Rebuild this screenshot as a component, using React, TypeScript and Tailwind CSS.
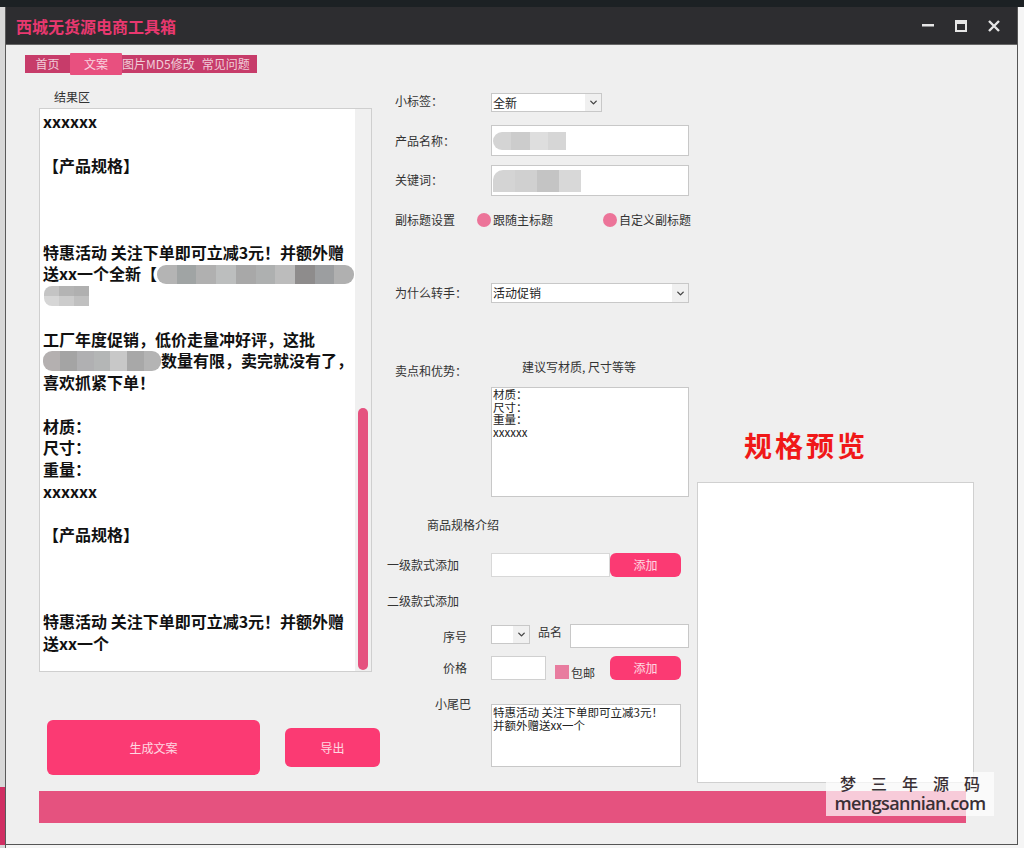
import { ChevronDown } from 'lucide-react'

const font = "font-['Noto_Sans_CJK_SC','Noto_Sans',sans-serif]"

// 结果区 lines, '' is an empty line
const resultLines: string[] = [
  'xxxxxx',
  '',
  '【产品规格】',
  '',
  '',
  '',
  '特惠活动 关注下单即可立减3元！并额外赠',
  'blur1',
  'blur2',
  '',
  '工厂年度促销，低价走量冲好评，这批',
  'blur3',
  '喜欢抓紧下单！',
  '',
  '材质：',
  '尺寸：',
  '重量：',
  'xxxxxx',
  '',
  '【产品规格】',
  '',
  '',
  '',
  '特惠活动 关注下单即可立减3元！并额外赠',
  '送xx一个',
]

// mosaic left over from the blurred product names
function Mosaic({ tones, className }: { tones: string[]; className: string }) {
  return (
    <span className={`flex shrink-0 overflow-hidden ${className}`}>
      {tones.map((tone, i) => (
        <span key={i} className={`flex-1 ${tone}`} />
      ))}
    </span>
  )
}

function ResultLine({ line }: { line: string }) {
  if (line === 'blur1') {
    return (
      <div className="flex items-center whitespace-pre">
        送xx一个全新【
        <Mosaic
          className="w-[197px] h-[19px] rounded-[9px] blur-[0.5px]"
          tones={['bg-[#b4b4b4]', 'bg-[#a0a4a4]', 'bg-[#b0b0b0]', 'bg-[#bcbebe]', 'bg-[#a8a8a8]', 'bg-[#aeb0b0]', 'bg-[#bcbcbc]', 'bg-[#8e8c8c]', 'bg-[#9c9ea0]', 'bg-[#b0b0b0]']}
        />
      </div>
    )
  }
  if (line === 'blur2') {
    return (
      <div className="flex flex-col h-[21.75px] justify-center pl-[1px]">
        <Mosaic className="w-[45px] h-[10px] rounded-tl-[8px] blur-[0.5px]" tones={['bg-[#c4c4c4]', 'bg-[#b4b4b4]', 'bg-[#b0b0b0]']} />
        <Mosaic className="w-[45px] h-[10px] rounded-bl-[8px] blur-[0.5px]" tones={['bg-[#d6d6d6]', 'bg-[#cccccc]', 'bg-[#c0c0c0]']} />
      </div>
    )
  }
  if (line === 'blur3') {
    return (
      <div className="flex items-center whitespace-pre">
        <Mosaic
          className="w-[118px] h-[20px] rounded-[9px] blur-[0.5px]"
          tones={['bg-[#b4b0b0]', 'bg-[#a4a4a4]', 'bg-[#b0b0b2]', 'bg-[#b4b6b6]', 'bg-[#c8c8c8]', 'bg-[#a8a8a8]', 'bg-[#b4b4b4]']}
        />
        数量有限，卖完就没有了，
      </div>
    )
  }
  return <div className="whitespace-pre min-h-[21.75px]">{line}</div>
}

function Select({ text, className }: { text: string; className: string }) {
  return (
    <div className={`flex items-center bg-white border border-[#c8c8c8] text-[12px] text-[#222] ${className}`}>
      <span className="flex-1 pl-[1px]">{text}</span>
      <span className="w-[16px] h-full flex items-center justify-center bg-[#f0f0f0]">
        <ChevronDown size={11} strokeWidth={3} className="text-[#444]" />
      </span>
    </div>
  )
}

function Radio({ text, className }: { text: string; className: string }) {
  return (
    <div className={`flex items-center gap-[2px] text-[12px] text-[#333] ${className}`}>
      <span className="w-[14px] h-[14px] rounded-full bg-[#ec7499]" />
      {text}
    </div>
  )
}

function AddButton() {
  return (
    <button className="w-[71px] h-[24px] rounded-[6px] bg-[#fb3a73] text-white/80 text-[12px]">添加</button>
  )
}

export default function App() {
  return (
    <div className={`relative w-[1024px] h-[848px] overflow-hidden flex flex-col bg-[#f5f5f5] ${font}`}>
      <div className="h-[7px] bg-[#1c2124]" />
      <div className="flex flex-1">
        <div className="w-[6px] flex flex-col justify-end bg-[#d8d8d8] border-r border-[#5a5a5a]">
          <div className="h-[58px] mb-[3px] bg-[#d02f63]" />
        </div>
        <div className="w-[1012px] h-[838px] flex flex-col bg-[#efefef] border-r border-b border-[#555]">
          {/* title bar */}
          <div className="h-[38px] flex items-center bg-[#2d2d30] border-b border-[#666]">
            <span className="ml-[10px] text-[16px] font-bold text-[#e8386f]">西城无货源电商工具箱</span>
            <div className="ml-auto mr-[17px] flex items-center gap-[21px]">
              <svg width="12" height="12" viewBox="0 0 12 12"><rect x="0" y="4" width="12" height="2.5" fill="#e6e6e6" /></svg>
              <svg width="12" height="12" viewBox="0 0 12 12"><rect x="1" y="1" width="10" height="10" fill="none" stroke="#e6e6e6" strokeWidth="2" /><rect x="1" y="1" width="10" height="3" fill="#e6e6e6" /></svg>
              <svg width="12" height="12" viewBox="0 0 12 12"><path d="M1 1l10 10M11 1L1 11" stroke="#e6e6e6" strokeWidth="2.4" fill="none" /></svg>
            </div>
          </div>

          {/* tabs */}
          <div className="mt-[8px] ml-[19px] h-[22px] flex items-center text-[12px] text-white/75">
            <div className="w-[232px] h-[18px] flex items-center bg-[#c73c6a]">
              <span className="w-[45px] text-center">首页</span>
              <span className="w-[52px] h-[22px] flex items-center justify-center rounded-[1px] bg-[#e8507f]">文案</span>
              <span className="whitespace-nowrap">图片MD5修改</span>
              <span className="ml-[7px]">常见问题</span>
            </div>
          </div>

          <div className="flex h-[708px]">
            {/* left column */}
            <div className="ml-[33px] w-[333px]">
              <div className="mt-[14px] h-[16px] pl-[15px] text-[12px] leading-[16px] text-[#333]">结果区</div>
              <div className="mt-[3px] h-[564px] flex bg-white border border-[#cfcfcf] overflow-hidden">
                <div className="flex-1 pl-[3px] pt-[2px] text-[16px] leading-[21.75px] font-bold text-[#111] overflow-hidden">
                  {resultLines.map((line, i) => (
                    <ResultLine key={i} line={line} />
                  ))}
                </div>
                <div className="w-[16px] flex flex-col justify-end items-center bg-[#f0f0f0]">
                  <div className="w-[10px] h-[262px] mb-[1px] rounded-full bg-[#e5527f]" />
                </div>
              </div>
              <div className="mt-[48px] ml-[8px] flex text-[12px] text-white/80">
                <button className="shrink-0 w-[213px] h-[55px] rounded-[6px] bg-[#fb3a73]">生成文案</button>
                <button className="shrink-0 ml-[25px] mt-[8px] w-[95px] h-[39px] rounded-[6px] bg-[#fb3a73]">导出</button>
              </div>
            </div>

            {/* middle column */}
            <div className="ml-[15px] w-[310px] text-[12px] text-[#333]">
              <div className="mt-[18px] h-[19px] flex items-center">
                <span className="w-[104px] pl-[8px] mb-[3px]">小标签：</span>
                <Select text="全新" className="w-[111px] h-full" />
              </div>
              <div className="mt-[13px] h-[31px] flex items-center">
                <span className="w-[104px] pl-[8px]">产品名称：</span>
                <div className="w-[198px] h-full flex items-center bg-white border border-[#c8c8c8] pl-[1px]">
                  <Mosaic className="w-[73px] h-[18px] rounded-l-[9px] blur-[0.5px]" tones={['bg-[#d4d4d4]', 'bg-[#cccccc]', 'bg-[#dedede]', 'bg-[#d6d6d6]']} />
                </div>
              </div>
              <div className="mt-[9px] h-[31px] flex items-center">
                <span className="w-[104px] pl-[8px] mb-[1px]">关键词：</span>
                <div className="w-[198px] h-full flex items-center bg-white border border-[#c8c8c8] pl-[1px]">
                  <Mosaic className="w-[88px] h-[22px] rounded-tl-[10px] blur-[0.5px]" tones={['bg-[#d4d4d4]', 'bg-[#d0d0d0]', 'bg-[#c4c4c4]', 'bg-[#d8d8d8]']} />
                </div>
              </div>
              <div className="mt-[16px] h-[16px] flex items-center whitespace-nowrap">
                <span className="w-[90px] pl-[8px]">副标题设置</span>
                <Radio text="跟随主标题" className="w-[126px]" />
                <Radio text="自定义副标题" className="" />
              </div>
              <div className="mt-[55px] h-[20px] flex items-center">
                <span className="w-[104px] pl-[8px]">为什么转手：</span>
                <Select text="活动促销" className="w-[198px] h-full" />
              </div>
              <div className="mt-[55px] h-[20px] flex">
                <span className="w-[135px] pl-[8px] pt-[4px]">卖点和优势：</span>
                <span>建议写材质, 尺寸等等</span>
              </div>
              <div className="mt-[9px] ml-[104px] w-[198px] h-[110px] bg-white border border-[#c8c8c8] pl-[1px] text-[11.5px] leading-[12.5px] text-[#222]">
                <div>材质：</div>
                <div>尺寸：</div>
                <div>重量：</div>
                <div>xxxxxx</div>
              </div>
              <div className="mt-[20px] h-[16px] pl-[40px] leading-[16px]">商品规格介绍</div>
              <div className="mt-[20px] h-[24px] flex items-center">
                <span className="w-[104px]">一级款式添加</span>
                <div className="w-[119px] h-full bg-white border border-[#d8d8d8]" />
                <AddButton />
              </div>
              <div className="mt-[16px] h-[16px] leading-[16px]">二级款式添加</div>
              <div className="mt-[15px] h-[24px] flex items-center">
                <span className="w-[104px] pl-[56px] pt-[1px]">序号</span>
                <Select text="" className="w-[39px] h-[19px] mb-[4px]" />
                <span className="ml-[8px] w-[32px] mb-[8px]">品名</span>
                <div className="w-[119px] h-full bg-white border border-[#c8c8c8]" />
              </div>
              <div className="mt-[8px] h-[24px] flex items-center">
                <span className="w-[104px] pl-[56px]">价格</span>
                <div className="w-[55px] h-full bg-white border border-[#d0d0d0]" />
                <span className="ml-[9px] mt-[8px] w-[14px] h-[14px] bg-[#e87c9f]" />
                <span className="ml-[2px] mt-[10px] w-[39px]">包邮</span>
                <AddButton />
              </div>
              <div className="mt-[24px] h-[63px] flex">
                <span className="w-[104px] pl-[48px] leading-[16px] -mt-[8px]">小尾巴</span>
                <div className="w-[190px] h-full bg-white border border-[#c8c8c8] pl-[1px] pt-[1px] text-[11.5px] leading-[12.5px] text-[#222]">
                  特惠活动 关注下单即可立减3元！
                  <br />
                  并额外赠送xx一个
                </div>
              </div>
            </div>

            {/* right column */}
            <div className="w-[277px]">
              <div className="mt-[350px] h-[40px] pl-[47px] text-[28px] leading-[40px] tracking-[3px] font-bold text-[#f01818] whitespace-nowrap">规格预览</div>
              <div className="mt-[17px] h-[301px] bg-white border border-[#d0d0d0]" />
            </div>
          </div>

          <div className="mt-[8px] ml-[33px] w-[927px] h-[32px] bg-[#e5527f]" />
        </div>
      </div>

      {/* watermark */}
      <div className="absolute left-[826px] top-[772px] w-[168px] h-[44px] flex flex-col items-center bg-white/70 text-[#3a3035]">
        <div className="text-[16px] leading-[22px] tracking-[15px] pl-[15px] font-medium whitespace-nowrap">梦三年源码</div>
        <div className="text-[18px] leading-[18px] font-['Open_Sans',sans-serif] font-semibold tracking-[-0.6px]">mengsannian.com</div>
      </div>
    </div>
  )
}
